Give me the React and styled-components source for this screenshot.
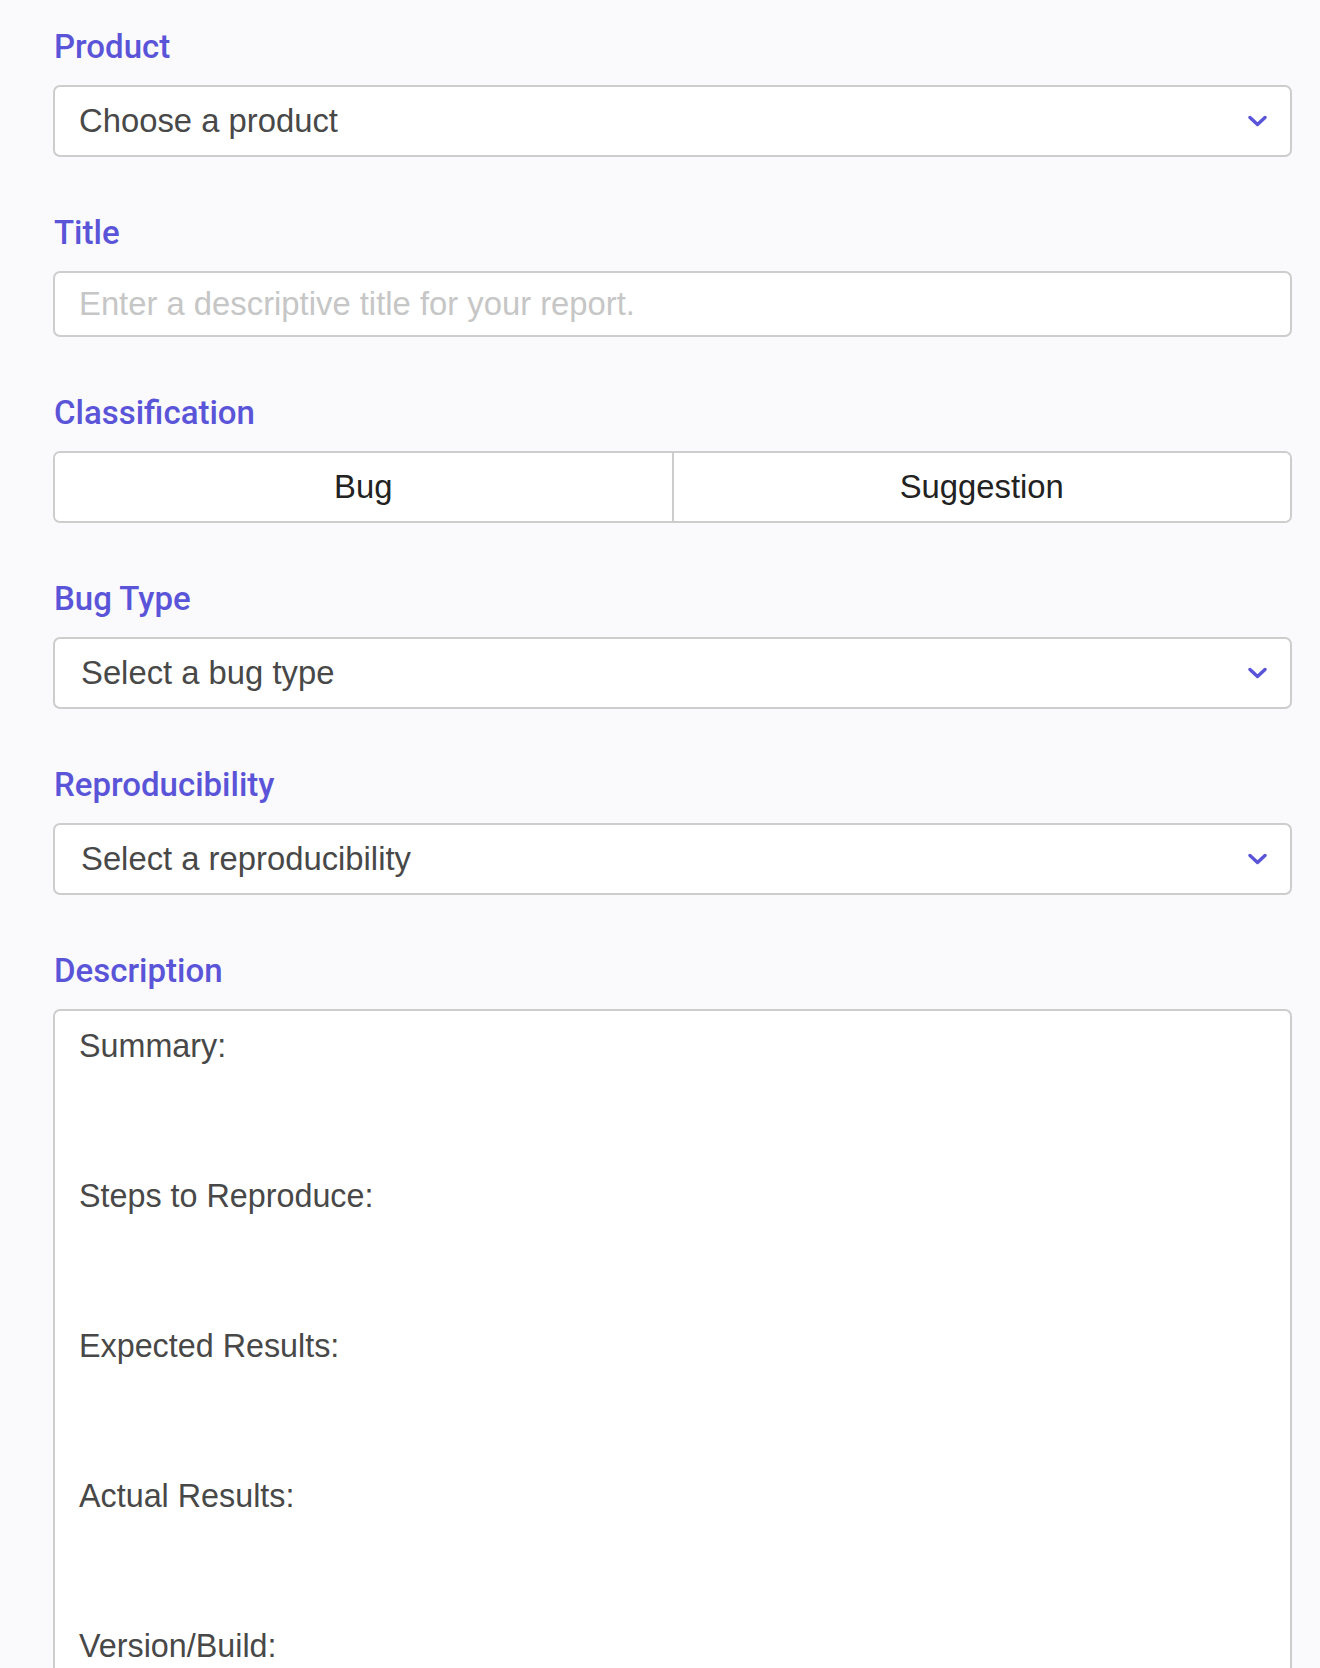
import React from 'react';
import styled, { createGlobalStyle } from 'styled-components';

const Global = createGlobalStyle`
  html, body {
    margin: 0;
    padding: 0;
    background: #fafafc;
    overflow: hidden;
  }
  * { box-sizing: border-box; }
`;

const Form = styled.form`
  display: flex;
  flex-direction: column;
  gap: 57px;
  padding: 28px 28px 0 53px;
  font-family: "Liberation Sans", Arial, sans-serif;
`;

const Field = styled.div`
  display: flex;
  flex-direction: column;
  gap: 19px;
`;

const Label = styled.label`
  font-family: Roboto, "Liberation Sans", Arial, sans-serif;
  font-size: 33px;
  line-height: 38px;
  font-weight: 500;
  color: #5a54d8;
  padding-left: 1px;
`;

const boxBase = `
  background: #ffffff;
  border: 2px solid #cdcdcd;
  border-radius: 7px;
  font-family: "Liberation Sans", Arial, sans-serif;
  font-size: 32.8px;
`;

const SelectBox = styled.div`
  ${boxBase}
  height: 72px;
  display: flex;
  align-items: center;
  justify-content: space-between;
  padding: 0 23px 0 ${p => p.$indent}px;
  color: #484848;
  cursor: pointer;
`;

const Chevron = styled.svg`
  width: 19px;
  height: 12px;
  flex: none;
`;

const TextInput = styled.input`
  ${boxBase}
  height: 66px;
  padding: 0 24px;
  color: #484848;
  outline: none;
  &::placeholder { color: #c6c6c6; }
`;

const Segmented = styled.div`
  ${boxBase}
  height: 72px;
  display: flex;
  overflow: hidden;
`;

const Segment = styled.button`
  flex: 1;
  border: none;
  border-left: ${p => (p.$divided ? '2px solid #cdcdcd' : 'none')};
  background: #ffffff;
  font-family: inherit;
  font-size: 32.8px;
  color: #222222;
  padding: 0;
  cursor: pointer;
`;

const TextArea = styled.textarea`
  ${boxBase}
  font-size: 32.3px;
  height: 720px;
  padding: 17px 24px;
  line-height: 37.5px;
  color: #484848;
  resize: none;
  outline: none;
`;

const ChevronIcon = () => (
  <Chevron viewBox="0 0 19 12">
    <polyline
      points="2,2.5 9.5,9.5 17,2.5"
      fill="none"
      stroke="#5a54d8"
      strokeWidth="3.4"
      strokeLinecap="round"
      strokeLinejoin="round"
    />
  </Chevron>
);

const Select = ({ children, indent = 24 }) => (
  <SelectBox $indent={indent}>
    <span>{children}</span>
    <ChevronIcon />
  </SelectBox>
);

const template =
  'Summary:\n\n\n\nSteps to Reproduce:\n\n\n\nExpected Results:\n\n\n\nActual Results:\n\n\n\nVersion/Build:';

export default function App() {
  return (
    <>
      <Global />
      <Form onSubmit={e => e.preventDefault()}>
        <Field>
          <Label>Product</Label>
          <Select indent={24}>Choose a product</Select>
        </Field>
        <Field>
          <Label>Title</Label>
          <TextInput placeholder="Enter a descriptive title for your report." />
        </Field>
        <Field>
          <Label>Classification</Label>
          <Segmented>
            <Segment type="button">Bug</Segment>
            <Segment type="button" $divided>Suggestion</Segment>
          </Segmented>
        </Field>
        <Field>
          <Label>Bug Type</Label>
          <Select indent={26}>Select a bug type</Select>
        </Field>
        <Field>
          <Label>Reproducibility</Label>
          <Select indent={26}>Select a reproducibility</Select>
        </Field>
        <Field>
          <Label>Description</Label>
          <TextArea defaultValue={template} />
        </Field>
      </Form>
    </>
  );
}
